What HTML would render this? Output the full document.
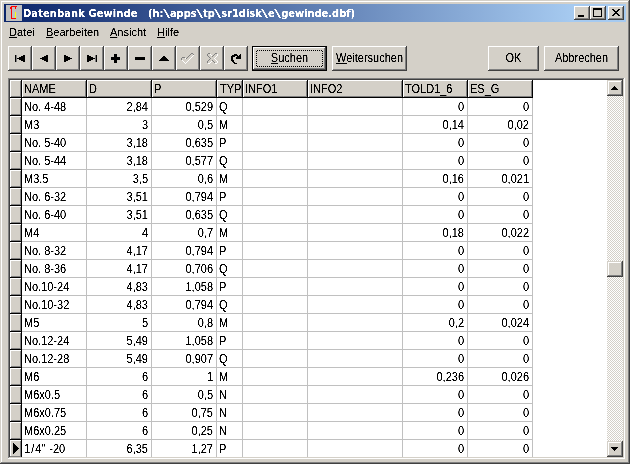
<!DOCTYPE html>
<html lang="de">
<head>
<meta charset="utf-8">
<title>Datenbank Gewinde</title>
<style>
html,body{margin:0;padding:0;}
body{width:630px;height:464px;overflow:hidden;background:#d4d0c8;position:relative;font-family:"Liberation Sans",sans-serif;color:#000;}
div,span,svg{position:absolute;box-sizing:border-box;}
u{text-decoration:underline;}
.t u{text-decoration:none;}
.t{font:11px/13px "Liberation Sans",sans-serif;white-space:pre;transform:scaleY(1.14);transform-origin:0 0;color:#000;}
.m{font:11px/13px "Liberation Sans",sans-serif;white-space:pre;color:#000;}
.r{text-align:right;}
.k{font-style:normal;margin:0 1px;}
.k2{font-style:normal;margin-right:1px;}
.bs{font-style:normal;font-weight:normal;display:inline-block;transform:scaleX(2);margin:0 1.5px;}
.btn{background:#d4d0c8;box-shadow:inset -1px -1px #404040,inset 1px 1px #fff,inset -2px -2px #808080,inset 2px 2px #d4d0c8;}
.sb{background:#d4d0c8;box-shadow:inset -1px -1px #404040,inset 1px 1px #d4d0c8,inset -2px -2px #808080,inset 2px 2px #fff;}
.hl{background:#c0c0c0;height:1px;}
.vl{background:#c0c0c0;width:1px;}
.bl{background:#000;}
.fx{background:#d4d0c8;box-shadow:inset 1px 1px #fff,inset -1px -1px #808080;}
</style>
</head>
<body>
<svg width="0" height="0" style="left:0;top:0"><defs><filter id="sharp" x="0" y="0" width="100%" height="100%" color-interpolation-filters="sRGB"><feComponentTransfer><feFuncA type="linear" slope="3" intercept="-0.8"/></feComponentTransfer></filter></defs></svg>
<div style="left:0;top:0;width:630px;height:464px;background:#d4d0c8;box-shadow:inset -1px -1px #404040,inset 1px 1px #d4d0c8,inset -2px -2px #808080,inset 2px 2px #fff;"></div>
<div style="left:4px;top:4px;width:622px;height:18px;background:linear-gradient(to right,#0a246a 0,#a6caf0 568px,#a6caf0 100%);"></div>
<svg style="left:6px;top:5px" width="16" height="16" viewBox="0 0 16 16" shape-rendering="crispEdges"><rect width="16" height="16" fill="#c0c0c0"/><rect x="5" y="1" width="6" height="1" fill="#f00"/><rect x="4" y="2" width="1" height="2" fill="#f00"/><rect x="9" y="2" width="1" height="2" fill="#f00"/><rect x="5" y="2" width="1" height="12" fill="#f00"/><rect x="5" y="13" width="5" height="1" fill="#f00"/><rect x="9" y="7" width="1" height="6" fill="#ff0"/></svg>
<div style="left:0;top:0;width:630px;height:30px;filter:url(#sharp);"><span id="ttl" style="left:23px;top:7px;letter-spacing:0.12px;font:bold 11px/14px 'DejaVu Sans Condensed','Liberation Sans',sans-serif;color:#fff;white-space:pre;">Datenbank Gewinde   </span><span id="ttl2" style="left:148px;top:7px;font:bold 11px/14px 'DejaVu Sans Condensed','Liberation Sans',sans-serif;color:#fff;white-space:pre;letter-spacing:0px;">(h:<i class="bs">\</i>apps<i class="bs">\</i>tp<i class="bs">\</i>sr1disk<i class="bs">\</i>e<i class="bs">\</i>gewinde.dbf)</span></div>
<div class="btn" style="left:574px;top:6px;width:16px;height:14px;"><div class="bl" style="left:4px;top:9px;width:6px;height:2px;"></div></div>
<div class="btn" style="left:590px;top:6px;width:16px;height:14px;"><div style="left:3px;top:2px;width:9px;height:9px;border:1px solid #000;border-top-width:2px;"></div></div>
<div class="btn" style="left:608px;top:6px;width:16px;height:14px;"><svg style="left:4px;top:3px" width="8" height="7" viewBox="0 0 8 7" shape-rendering="crispEdges"><path d="M0 0h2v1h1v1h2v-1h1v-1h2v1h-1v1h-1v1h-1v1h1v1h1v1h1v1h-2v-1h-1v-1h-2v1h-1v1h-2v-1h1v-1h1v-1h1v-1h-1v-1h-1v-1h-1z" fill="#000"/></svg></div>
<div class="btn" style="left:8px;top:46px;width:24px;height:25px;"><svg style="left:0;top:0" width="24" height="25" viewBox="0 0 24 25" shape-rendering="crispEdges" fill="#000"><rect x="7" y="9" width="1" height="7"/><rect x="8" y="9" width="1" height="7" fill="#808080"/><path d="M17 9v7h-2v-1h-2v-1h-2v-1h-2v-1h2v-1h2v-1h2v-1z"/></svg></div>
<div class="btn" style="left:32px;top:46px;width:24px;height:25px;"><svg style="left:0;top:0" width="24" height="25" viewBox="0 0 24 25" shape-rendering="crispEdges" fill="#000"><path d="M16 9v7h-2v-1h-2v-1h-2v-1h-2v-1h2v-1h2v-1h2v-1z"/></svg></div>
<div class="btn" style="left:56px;top:46px;width:24px;height:25px;"><svg style="left:0;top:0" width="24" height="25" viewBox="0 0 24 25" shape-rendering="crispEdges" fill="#000"><path d="M8 9v7h2v-1h2v-1h2v-1h2v-1h-2v-1h-2v-1h-2v-1z"/></svg></div>
<div class="btn" style="left:80px;top:46px;width:24px;height:25px;"><svg style="left:0;top:0" width="24" height="25" viewBox="0 0 24 25" shape-rendering="crispEdges" fill="#000"><path d="M7 9v7h2v-1h2v-1h2v-1h2v-1h-2v-1h-2v-1h-2v-1z"/><rect x="15" y="9" width="1" height="7" fill="#808080"/><rect x="16" y="9" width="1" height="7"/></svg></div>
<div class="btn" style="left:104px;top:46px;width:24px;height:25px;"><svg style="left:0;top:0" width="24" height="25" viewBox="0 0 24 25" shape-rendering="crispEdges" fill="#000"><rect x="7" y="11" width="9" height="3"/><rect x="10" y="8" width="3" height="9"/></svg></div>
<div class="btn" style="left:128px;top:46px;width:24px;height:25px;"><svg style="left:0;top:0" width="24" height="25" viewBox="0 0 24 25" shape-rendering="crispEdges" fill="#000"><rect x="7" y="11" width="10" height="3"/></svg></div>
<div class="btn" style="left:152px;top:46px;width:24px;height:25px;"><svg style="left:0;top:0" width="24" height="25" viewBox="0 0 24 25" shape-rendering="crispEdges" fill="#000"><path d="M11 10h2v1h1v1h1v1h1v1h1v1h-10v-1h1v-1h1v-1h1v-1h1z"/></svg></div>
<div class="btn" style="left:176px;top:46px;width:24px;height:25px;"><svg style="left:0;top:0" width="24" height="25" viewBox="0 0 24 25" shape-rendering="crispEdges" fill="#000"><rect x="9" y="12" width="1" height="1" fill="#fff"/><rect x="6" y="14" width="1" height="1" fill="#fff"/><rect x="7" y="15" width="1" height="1" fill="#fff"/><rect x="8" y="16" width="1" height="1" fill="#fff"/><rect x="9" y="17" width="1" height="1" fill="#fff"/><rect x="10" y="16" width="1" height="1" fill="#fff"/><rect x="11" y="15" width="1" height="1" fill="#fff"/><rect x="12" y="14" width="1" height="1" fill="#fff"/><rect x="13" y="13" width="1" height="1" fill="#fff"/><rect x="14" y="12" width="1" height="1" fill="#fff"/><rect x="15" y="11" width="1" height="1" fill="#fff"/><rect x="16" y="10" width="1" height="1" fill="#fff"/><rect x="17" y="9" width="1" height="1" fill="#fff"/><rect x="6" y="11" width="1" height="1" fill="#808080"/><rect x="7" y="11" width="1" height="1" fill="#808080"/><rect x="8" y="11" width="1" height="1" fill="#808080"/><rect x="5" y="12" width="1" height="1" fill="#808080"/><rect x="5" y="13" width="1" height="1" fill="#808080"/><rect x="10" y="12" width="1" height="1" fill="#808080"/><rect x="11" y="11" width="1" height="1" fill="#808080"/><rect x="12" y="10" width="1" height="1" fill="#808080"/><rect x="13" y="9" width="1" height="1" fill="#808080"/><rect x="14" y="8" width="1" height="1" fill="#808080"/><rect x="15" y="7" width="1" height="1" fill="#808080"/><rect x="16" y="7" width="1" height="1" fill="#808080"/><rect x="17" y="8" width="1" height="1" fill="#808080"/></svg></div>
<div class="btn" style="left:200px;top:46px;width:24px;height:25px;"><svg style="left:0;top:0" width="24" height="25" viewBox="0 0 24 25" shape-rendering="crispEdges" fill="#000"><rect x="10" y="8" width="1" height="1" fill="#fff"/><rect x="11" y="9" width="1" height="1" fill="#fff"/><rect x="17" y="8" width="1" height="1" fill="#fff"/><rect x="17" y="9" width="1" height="1" fill="#fff"/><rect x="16" y="10" width="1" height="1" fill="#fff"/><rect x="15" y="11" width="1" height="1" fill="#fff"/><rect x="14" y="12" width="1" height="1" fill="#fff"/><rect x="15" y="13" width="1" height="1" fill="#fff"/><rect x="16" y="14" width="1" height="1" fill="#fff"/><rect x="17" y="15" width="1" height="1" fill="#fff"/><rect x="17" y="16" width="1" height="1" fill="#fff"/><rect x="8" y="17" width="1" height="1" fill="#fff"/><rect x="9" y="17" width="1" height="1" fill="#fff"/><rect x="10" y="16" width="1" height="1" fill="#fff"/><rect x="11" y="15" width="1" height="1" fill="#fff"/><rect x="15" y="17" width="1" height="1" fill="#fff"/><rect x="16" y="17" width="1" height="1" fill="#fff"/><rect x="8" y="7" width="1" height="1" fill="#808080"/><rect x="9" y="7" width="1" height="1" fill="#808080"/><rect x="7" y="8" width="1" height="1" fill="#808080"/><rect x="7" y="9" width="1" height="1" fill="#808080"/><rect x="8" y="10" width="1" height="1" fill="#808080"/><rect x="9" y="11" width="1" height="1" fill="#808080"/><rect x="10" y="12" width="1" height="1" fill="#808080"/><rect x="9" y="13" width="1" height="1" fill="#808080"/><rect x="8" y="14" width="1" height="1" fill="#808080"/><rect x="7" y="15" width="1" height="1" fill="#808080"/><rect x="7" y="16" width="1" height="1" fill="#808080"/><rect x="15" y="7" width="1" height="1" fill="#808080"/><rect x="16" y="7" width="1" height="1" fill="#808080"/><rect x="14" y="8" width="1" height="1" fill="#808080"/><rect x="13" y="9" width="1" height="1" fill="#808080"/><rect x="12" y="10" width="1" height="1" fill="#808080"/><rect x="12" y="14" width="1" height="1" fill="#808080"/><rect x="13" y="15" width="1" height="1" fill="#808080"/><rect x="14" y="16" width="1" height="1" fill="#808080"/></svg></div>
<div class="btn" style="left:224px;top:46px;width:24px;height:25px;"><svg style="left:0;top:0" width="24" height="25" viewBox="0 0 24 25" shape-rendering="crispEdges" fill="#000"><rect x="10" y="8" width="3" height="1" fill="#000"/><rect x="16" y="8" width="1" height="1" fill="#000"/><rect x="8" y="9" width="6" height="1" fill="#000"/><rect x="15" y="9" width="2" height="1" fill="#000"/><rect x="7" y="10" width="4" height="1" fill="#000"/><rect x="13" y="10" width="4" height="1" fill="#000"/><rect x="7" y="11" width="2" height="1" fill="#000"/><rect x="12" y="11" width="5" height="1" fill="#000"/><rect x="7" y="12" width="2" height="1" fill="#000"/><rect x="12" y="12" width="5" height="1" fill="#000"/><rect x="7" y="13" width="2" height="1" fill="#000"/><rect x="7" y="14" width="3" height="1" fill="#000"/><rect x="8" y="15" width="2" height="1" fill="#000"/><rect x="9" y="16" width="2" height="1" fill="#000"/><rect x="10" y="17" width="3" height="1" fill="#000"/></svg></div>
<div style="left:252px;top:46px;width:75px;height:25px;background:#d4d0c8;border:1px solid #000;box-shadow:inset -1px -1px #404040,inset 1px 1px #fff,inset -2px -2px #808080,inset 2px 2px #d4d0c8;"><svg style="left:3px;top:3px" width="67" height="17" viewBox="0 0 67 17" shape-rendering="crispEdges"><path d="M0 .5H67M0 16.5H67M.5 0V17M66.5 0V17" fill="none" stroke="#000" stroke-width="1" stroke-dasharray="1 1" stroke-dashoffset="1"/></svg></div>
<div class="btn" style="left:332px;top:46px;width:75px;height:25px;"></div>
<div class="btn" style="left:488px;top:46px;width:51px;height:25px;"></div>
<div class="btn" style="left:544px;top:46px;width:75px;height:25px;"></div>
<div class="bl" style="left:271px;top:63px;width:7px;height:1px;"></div><div class="bl" style="left:336px;top:63px;width:11px;height:1px;"></div>
<div style="left:8px;top:78px;width:617px;height:381px;background:#fff;box-shadow:inset -1px -1px #fff,inset 1px 1px #808080,inset -2px -2px #d4d0c8,inset 2px 2px #404040;"></div>
<div class="fx" style="left:10px;top:80px;width:11px;height:17px;"></div>
<div class="fx" style="left:22px;top:80px;width:64px;height:17px;"></div>
<div class="fx" style="left:87px;top:80px;width:64px;height:17px;"></div>
<div class="fx" style="left:152px;top:80px;width:64px;height:17px;"></div>
<div class="fx" style="left:217px;top:80px;width:25px;height:17px;"></div>
<div class="fx" style="left:243px;top:80px;width:64px;height:17px;"></div>
<div class="fx" style="left:308px;top:80px;width:94px;height:17px;"></div>
<div class="fx" style="left:403px;top:80px;width:64px;height:17px;"></div>
<div class="fx" style="left:468px;top:80px;width:64px;height:17px;"></div>
<div class="bl" style="left:10px;top:97px;width:523px;height:1px;"></div>
<div class="bl" style="left:21px;top:80px;width:1px;height:377px;"></div>
<div class="bl" style="left:86px;top:80px;width:1px;height:18px;"></div>
<div class="vl" style="left:86px;top:98px;height:359px;"></div>
<div class="bl" style="left:151px;top:80px;width:1px;height:18px;"></div>
<div class="vl" style="left:151px;top:98px;height:359px;"></div>
<div class="bl" style="left:216px;top:80px;width:1px;height:18px;"></div>
<div class="vl" style="left:216px;top:98px;height:359px;"></div>
<div class="bl" style="left:242px;top:80px;width:1px;height:18px;"></div>
<div class="vl" style="left:242px;top:98px;height:359px;"></div>
<div class="bl" style="left:307px;top:80px;width:1px;height:18px;"></div>
<div class="vl" style="left:307px;top:98px;height:359px;"></div>
<div class="bl" style="left:402px;top:80px;width:1px;height:18px;"></div>
<div class="vl" style="left:402px;top:98px;height:359px;"></div>
<div class="bl" style="left:467px;top:80px;width:1px;height:18px;"></div>
<div class="vl" style="left:467px;top:98px;height:359px;"></div>
<div class="bl" style="left:532px;top:80px;width:1px;height:18px;"></div>
<div class="vl" style="left:532px;top:98px;height:359px;"></div>
<div class="fx" style="left:10px;top:98px;width:11px;height:17px;"></div>
<div class="bl" style="left:10px;top:115px;width:11px;height:1px;"></div>
<div class="hl" style="left:22px;top:115px;width:511px;"></div>
<div class="fx" style="left:10px;top:116px;width:11px;height:17px;"></div>
<div class="bl" style="left:10px;top:133px;width:11px;height:1px;"></div>
<div class="hl" style="left:22px;top:133px;width:511px;"></div>
<div class="fx" style="left:10px;top:134px;width:11px;height:17px;"></div>
<div class="bl" style="left:10px;top:151px;width:11px;height:1px;"></div>
<div class="hl" style="left:22px;top:151px;width:511px;"></div>
<div class="fx" style="left:10px;top:152px;width:11px;height:17px;"></div>
<div class="bl" style="left:10px;top:169px;width:11px;height:1px;"></div>
<div class="hl" style="left:22px;top:169px;width:511px;"></div>
<div class="fx" style="left:10px;top:170px;width:11px;height:17px;"></div>
<div class="bl" style="left:10px;top:187px;width:11px;height:1px;"></div>
<div class="hl" style="left:22px;top:187px;width:511px;"></div>
<div class="fx" style="left:10px;top:188px;width:11px;height:17px;"></div>
<div class="bl" style="left:10px;top:205px;width:11px;height:1px;"></div>
<div class="hl" style="left:22px;top:205px;width:511px;"></div>
<div class="fx" style="left:10px;top:206px;width:11px;height:17px;"></div>
<div class="bl" style="left:10px;top:223px;width:11px;height:1px;"></div>
<div class="hl" style="left:22px;top:223px;width:511px;"></div>
<div class="fx" style="left:10px;top:224px;width:11px;height:17px;"></div>
<div class="bl" style="left:10px;top:241px;width:11px;height:1px;"></div>
<div class="hl" style="left:22px;top:241px;width:511px;"></div>
<div class="fx" style="left:10px;top:242px;width:11px;height:17px;"></div>
<div class="bl" style="left:10px;top:259px;width:11px;height:1px;"></div>
<div class="hl" style="left:22px;top:259px;width:511px;"></div>
<div class="fx" style="left:10px;top:260px;width:11px;height:17px;"></div>
<div class="bl" style="left:10px;top:277px;width:11px;height:1px;"></div>
<div class="hl" style="left:22px;top:277px;width:511px;"></div>
<div class="fx" style="left:10px;top:278px;width:11px;height:17px;"></div>
<div class="bl" style="left:10px;top:295px;width:11px;height:1px;"></div>
<div class="hl" style="left:22px;top:295px;width:511px;"></div>
<div class="fx" style="left:10px;top:296px;width:11px;height:17px;"></div>
<div class="bl" style="left:10px;top:313px;width:11px;height:1px;"></div>
<div class="hl" style="left:22px;top:313px;width:511px;"></div>
<div class="fx" style="left:10px;top:314px;width:11px;height:17px;"></div>
<div class="bl" style="left:10px;top:331px;width:11px;height:1px;"></div>
<div class="hl" style="left:22px;top:331px;width:511px;"></div>
<div class="fx" style="left:10px;top:332px;width:11px;height:17px;"></div>
<div class="bl" style="left:10px;top:349px;width:11px;height:1px;"></div>
<div class="hl" style="left:22px;top:349px;width:511px;"></div>
<div class="fx" style="left:10px;top:350px;width:11px;height:17px;"></div>
<div class="bl" style="left:10px;top:367px;width:11px;height:1px;"></div>
<div class="hl" style="left:22px;top:367px;width:511px;"></div>
<div class="fx" style="left:10px;top:368px;width:11px;height:17px;"></div>
<div class="bl" style="left:10px;top:385px;width:11px;height:1px;"></div>
<div class="hl" style="left:22px;top:385px;width:511px;"></div>
<div class="fx" style="left:10px;top:386px;width:11px;height:17px;"></div>
<div class="bl" style="left:10px;top:403px;width:11px;height:1px;"></div>
<div class="hl" style="left:22px;top:403px;width:511px;"></div>
<div class="fx" style="left:10px;top:404px;width:11px;height:17px;"></div>
<div class="bl" style="left:10px;top:421px;width:11px;height:1px;"></div>
<div class="hl" style="left:22px;top:421px;width:511px;"></div>
<div class="fx" style="left:10px;top:422px;width:11px;height:17px;"></div>
<div class="bl" style="left:10px;top:439px;width:11px;height:1px;"></div>
<div class="hl" style="left:22px;top:439px;width:511px;"></div>
<div class="fx" style="left:10px;top:440px;width:11px;height:17px;"></div>
<div style="left:10px;top:456px;width:11px;height:1px;background:#808080;"></div>
<svg style="left:10px;top:440px" width="11" height="17" viewBox="0 0 11 17" shape-rendering="crispEdges"><path d="M3 3h1v1h1v1h1v1h1v1h1v1h1v1h-1v1h-1v1h-1v1h-1v1h-1v1h-1z" fill="#000"/></svg>
<div style="left:607px;top:80px;width:16px;height:377px;background:#fff;background-image:linear-gradient(45deg,#d4d0c8 25%,transparent 25%,transparent 75%,#d4d0c8 75%),linear-gradient(45deg,#d4d0c8 25%,transparent 25%,transparent 75%,#d4d0c8 75%);background-size:2px 2px;background-position:0 0,1px 1px;"></div>
<div class="sb" style="left:607px;top:80px;width:16px;height:16px;"><svg style="left:4px;top:6px" width="7" height="4" viewBox="0 0 7 4" shape-rendering="crispEdges"><path d="M3 0h1v1h1v1h1v1h1v1h-7v-1h1v-1h1v-1h1z" fill="#000"/></svg></div>
<div class="sb" style="left:607px;top:261px;width:16px;height:16px;"></div>
<div class="sb" style="left:607px;top:441px;width:16px;height:16px;"><svg style="left:4px;top:6px" width="7" height="4" viewBox="0 0 7 4" shape-rendering="crispEdges"><path d="M0 0h7v1h-1v1h-1v1h-1v1h-1v-1h-1v-1h-1v-1h-1z" fill="#000"/></svg></div>
<div id="txt" style="left:0;top:0;width:630px;height:464px;filter:url(#sharp);">
<span class="m" style="left:9px;top:26px;"><u>D</u>atei</span>
<span class="m" style="left:46px;top:26px;"><u>B</u>earbeiten</span>
<span class="m" style="left:110px;top:26px;"><u>A</u>nsicht</span>
<span class="m" style="left:157px;top:26px;"><u>H</u>ilfe</span>
<span class="t" id="b1" style="left:252px;top:51px;width:75px;text-align:center;"><u>S</u>uchen</span>
<span class="t" id="b2" style="left:332px;top:51px;width:75px;text-align:center;"><u>W</u>eitersuchen</span>
<span class="t" id="b3" style="left:488px;top:51px;width:51px;text-align:center;">OK</span>
<span class="t" id="b4" style="left:544px;top:51px;width:75px;text-align:center;">Abbrechen</span>
<span class="t" style="left:24px;top:82px;">NAME</span>
<span class="t" style="left:89px;top:82px;">D</span>
<span class="t" style="left:154px;top:82px;">P</span>
<span class="t" style="left:220px;top:82px;">TYP</span>
<span class="t" style="left:245px;top:82px;">INFO1</span>
<span class="t" style="left:310px;top:82px;">INFO2</span>
<span class="t" style="left:405px;top:82px;">TOLD1_6</span>
<span class="t" style="left:470px;top:82px;">ES_G</span>
<span class="t" style="left:24px;top:100px;">No. 4-48</span>
<span class="t r" style="left:87px;top:100px;width:61px;">2,84</span>
<span class="t r" style="left:152px;top:100px;width:61px;">0,529</span>
<span class="t" style="left:219px;top:100px;">Q</span>
<span class="t r" style="left:403px;top:100px;width:61px;">0</span>
<span class="t r" style="left:468px;top:100px;width:61px;">0</span>
<span class="t" style="left:24px;top:118px;">M3</span>
<span class="t r" style="left:87px;top:118px;width:61px;">3</span>
<span class="t r" style="left:152px;top:118px;width:61px;">0,5</span>
<span class="t" style="left:219px;top:118px;">M</span>
<span class="t r" style="left:403px;top:118px;width:61px;">0,14</span>
<span class="t r" style="left:468px;top:118px;width:61px;">0,02</span>
<span class="t" style="left:24px;top:136px;">No. 5-40</span>
<span class="t r" style="left:87px;top:136px;width:61px;">3,18</span>
<span class="t r" style="left:152px;top:136px;width:61px;">0,635</span>
<span class="t" style="left:219px;top:136px;">P</span>
<span class="t r" style="left:403px;top:136px;width:61px;">0</span>
<span class="t r" style="left:468px;top:136px;width:61px;">0</span>
<span class="t" style="left:24px;top:154px;">No. 5-44</span>
<span class="t r" style="left:87px;top:154px;width:61px;">3,18</span>
<span class="t r" style="left:152px;top:154px;width:61px;">0,577</span>
<span class="t" style="left:219px;top:154px;">Q</span>
<span class="t r" style="left:403px;top:154px;width:61px;">0</span>
<span class="t r" style="left:468px;top:154px;width:61px;">0</span>
<span class="t" style="left:24px;top:172px;">M3.5</span>
<span class="t r" style="left:87px;top:172px;width:61px;">3,5</span>
<span class="t r" style="left:152px;top:172px;width:61px;">0,6</span>
<span class="t" style="left:219px;top:172px;">M</span>
<span class="t r" style="left:403px;top:172px;width:61px;">0,16</span>
<span class="t r" style="left:468px;top:172px;width:61px;">0,021</span>
<span class="t" style="left:24px;top:190px;">No. 6-32</span>
<span class="t r" style="left:87px;top:190px;width:61px;">3,51</span>
<span class="t r" style="left:152px;top:190px;width:61px;">0,794</span>
<span class="t" style="left:219px;top:190px;">P</span>
<span class="t r" style="left:403px;top:190px;width:61px;">0</span>
<span class="t r" style="left:468px;top:190px;width:61px;">0</span>
<span class="t" style="left:24px;top:208px;">No. 6-40</span>
<span class="t r" style="left:87px;top:208px;width:61px;">3,51</span>
<span class="t r" style="left:152px;top:208px;width:61px;">0,635</span>
<span class="t" style="left:219px;top:208px;">Q</span>
<span class="t r" style="left:403px;top:208px;width:61px;">0</span>
<span class="t r" style="left:468px;top:208px;width:61px;">0</span>
<span class="t" style="left:24px;top:226px;">M4</span>
<span class="t r" style="left:87px;top:226px;width:61px;">4</span>
<span class="t r" style="left:152px;top:226px;width:61px;">0,7</span>
<span class="t" style="left:219px;top:226px;">M</span>
<span class="t r" style="left:403px;top:226px;width:61px;">0,18</span>
<span class="t r" style="left:468px;top:226px;width:61px;">0,022</span>
<span class="t" style="left:24px;top:244px;">No. 8-32</span>
<span class="t r" style="left:87px;top:244px;width:61px;">4,17</span>
<span class="t r" style="left:152px;top:244px;width:61px;">0,794</span>
<span class="t" style="left:219px;top:244px;">P</span>
<span class="t r" style="left:403px;top:244px;width:61px;">0</span>
<span class="t r" style="left:468px;top:244px;width:61px;">0</span>
<span class="t" style="left:24px;top:262px;">No. 8-36</span>
<span class="t r" style="left:87px;top:262px;width:61px;">4,17</span>
<span class="t r" style="left:152px;top:262px;width:61px;">0,706</span>
<span class="t" style="left:219px;top:262px;">Q</span>
<span class="t r" style="left:403px;top:262px;width:61px;">0</span>
<span class="t r" style="left:468px;top:262px;width:61px;">0</span>
<span class="t" style="left:24px;top:280px;">No.10-24</span>
<span class="t r" style="left:87px;top:280px;width:61px;">4,83</span>
<span class="t r" style="left:152px;top:280px;width:61px;">1,058</span>
<span class="t" style="left:219px;top:280px;">P</span>
<span class="t r" style="left:403px;top:280px;width:61px;">0</span>
<span class="t r" style="left:468px;top:280px;width:61px;">0</span>
<span class="t" style="left:24px;top:298px;">No.10-32</span>
<span class="t r" style="left:87px;top:298px;width:61px;">4,83</span>
<span class="t r" style="left:152px;top:298px;width:61px;">0,794</span>
<span class="t" style="left:219px;top:298px;">Q</span>
<span class="t r" style="left:403px;top:298px;width:61px;">0</span>
<span class="t r" style="left:468px;top:298px;width:61px;">0</span>
<span class="t" style="left:24px;top:316px;">M5</span>
<span class="t r" style="left:87px;top:316px;width:61px;">5</span>
<span class="t r" style="left:152px;top:316px;width:61px;">0,8</span>
<span class="t" style="left:219px;top:316px;">M</span>
<span class="t r" style="left:403px;top:316px;width:61px;">0,2</span>
<span class="t r" style="left:468px;top:316px;width:61px;">0,024</span>
<span class="t" style="left:24px;top:334px;">No.12-24</span>
<span class="t r" style="left:87px;top:334px;width:61px;">5,49</span>
<span class="t r" style="left:152px;top:334px;width:61px;">1,058</span>
<span class="t" style="left:219px;top:334px;">P</span>
<span class="t r" style="left:403px;top:334px;width:61px;">0</span>
<span class="t r" style="left:468px;top:334px;width:61px;">0</span>
<span class="t" style="left:24px;top:352px;">No.12-28</span>
<span class="t r" style="left:87px;top:352px;width:61px;">5,49</span>
<span class="t r" style="left:152px;top:352px;width:61px;">0,907</span>
<span class="t" style="left:219px;top:352px;">Q</span>
<span class="t r" style="left:403px;top:352px;width:61px;">0</span>
<span class="t r" style="left:468px;top:352px;width:61px;">0</span>
<span class="t" style="left:24px;top:370px;">M6</span>
<span class="t r" style="left:87px;top:370px;width:61px;">6</span>
<span class="t r" style="left:152px;top:370px;width:61px;">1</span>
<span class="t" style="left:219px;top:370px;">M</span>
<span class="t r" style="left:403px;top:370px;width:61px;">0,236</span>
<span class="t r" style="left:468px;top:370px;width:61px;">0,026</span>
<span class="t" style="left:24px;top:388px;">M6x0.5</span>
<span class="t r" style="left:87px;top:388px;width:61px;">6</span>
<span class="t r" style="left:152px;top:388px;width:61px;">0,5</span>
<span class="t" style="left:219px;top:388px;">N</span>
<span class="t r" style="left:403px;top:388px;width:61px;">0</span>
<span class="t r" style="left:468px;top:388px;width:61px;">0</span>
<span class="t" style="left:24px;top:406px;">M6x0.75</span>
<span class="t r" style="left:87px;top:406px;width:61px;">6</span>
<span class="t r" style="left:152px;top:406px;width:61px;">0,75</span>
<span class="t" style="left:219px;top:406px;">N</span>
<span class="t r" style="left:403px;top:406px;width:61px;">0</span>
<span class="t r" style="left:468px;top:406px;width:61px;">0</span>
<span class="t" style="left:24px;top:424px;">M6x0.25</span>
<span class="t r" style="left:87px;top:424px;width:61px;">6</span>
<span class="t r" style="left:152px;top:424px;width:61px;">0,25</span>
<span class="t" style="left:219px;top:424px;">N</span>
<span class="t r" style="left:403px;top:424px;width:61px;">0</span>
<span class="t r" style="left:468px;top:424px;width:61px;">0</span>
<span class="t" style="left:24px;top:442px;">1<i class="k">/</i>4<i class="k2">&quot;</i> -20</span>
<span class="t r" style="left:87px;top:442px;width:61px;">6,35</span>
<span class="t r" style="left:152px;top:442px;width:61px;">1,27</span>
<span class="t" style="left:219px;top:442px;">P</span>
<span class="t r" style="left:403px;top:442px;width:61px;">0</span>
<span class="t r" style="left:468px;top:442px;width:61px;">0</span>
</div>
</body>
</html>
